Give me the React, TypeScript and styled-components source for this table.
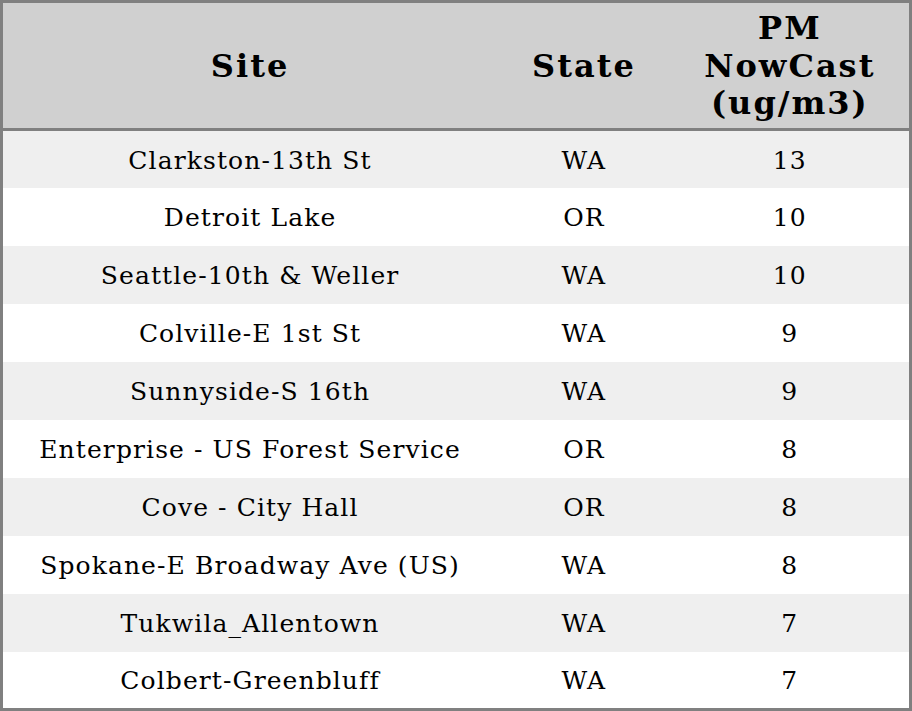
import React from "react";
import styled, { createGlobalStyle } from "styled-components";

const Global = createGlobalStyle`
  html, body { margin: 0; padding: 0; background: #fff; }
  body { font-family: "DejaVu Serif", serif; }
`;

const Table = styled.table`
  width: 912px;
  height: 711px;
  box-sizing: border-box;
  border-collapse: collapse;
  table-layout: fixed;
  border: 3px solid #808080;
  font-family: "DejaVu Serif", serif;
  color: #000;
`;

const HeadCell = styled.th`
  height: 123px;
  padding: 2px 0 0;
  background: #d0d0d0;
  border-bottom: 3px solid #808080;
  font-size: 32px;
  font-weight: bold;
  letter-spacing: 2px;
  line-height: 37.5px;
  text-align: center;
  vertical-align: middle;
`;

const Row = styled.tr<{ $odd: boolean }>`
  height: 57.7px;
  background: ${(p) => (p.$odd ? "#efefef" : "#ffffff")};
`;

const Cell = styled.td`
  padding: 2px 0 0;
  font-size: 25px;
  letter-spacing: 1.1px;
  text-align: center;
  vertical-align: middle;
  white-space: nowrap;
`;

const rows: [string, string, string][] = [
  ["Clarkston-13th St", "WA", "13"],
  ["Detroit Lake", "OR", "10"],
  ["Seattle-10th & Weller", "WA", "10"],
  ["Colville-E 1st St", "WA", "9"],
  ["Sunnyside-S 16th", "WA", "9"],
  ["Enterprise - US Forest Service", "OR", "8"],
  ["Cove - City Hall", "OR", "8"],
  ["Spokane-E Broadway Ave (US)", "WA", "8"],
  ["Tukwila_Allentown", "WA", "7"],
  ["Colbert-Greenbluff", "WA", "7"],
];

export default function App() {
  return (
    <>
      <Global />
      <Table>
        <colgroup>
          <col style={{ width: 494 }} />
          <col style={{ width: 173 }} />
          <col style={{ width: 239 }} />
        </colgroup>
        <thead>
          <tr>
            <HeadCell>Site</HeadCell>
            <HeadCell>State</HeadCell>
            <HeadCell>
              PM
              <br />
              NowCast
              <br />
              (ug/m3)
            </HeadCell>
          </tr>
        </thead>
        <tbody>
          {rows.map((r, i) => (
            <Row key={i} $odd={i % 2 === 0}>
              <Cell>{r[0]}</Cell>
              <Cell>{r[1]}</Cell>
              <Cell>{r[2]}</Cell>
            </Row>
          ))}
        </tbody>
      </Table>
    </>
  );
}
